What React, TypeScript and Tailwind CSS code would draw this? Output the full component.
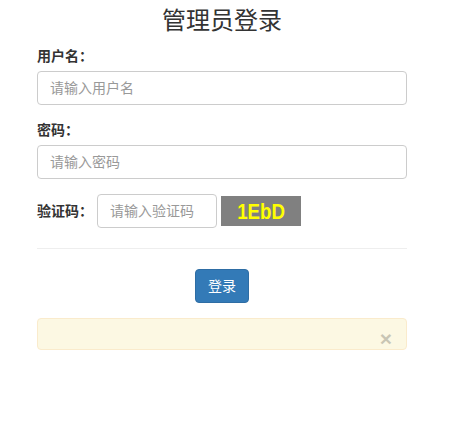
import React from "react";

export default function App() {
  const font = {
    fontFamily:
      '"Liberation Sans", "Noto Sans CJK SC", Arial, sans-serif',
  };
  return (
    <div className="min-h-[421px] w-[449px] bg-white text-[#333]" style={font}>
      <div className="ml-[37px] w-[370px]">
        <h1 className="pt-[7px] pb-[11px] text-center text-[24px] leading-[28px] font-normal text-[#333]">
          管理员登录
        </h1>
        <div className="mb-[15px]">
          <label className="mb-[5px] block text-[14px] leading-[20px] font-bold">
            用户名：
          </label>
          <input
            className="block h-[34px] w-full rounded-[4px] border border-[#ccc] px-[12px] text-[14px] outline-none placeholder:text-[#999]"
            placeholder="请输入用户名"
          />
        </div>
        <div className="mb-[15px]">
          <label className="mb-[5px] block text-[14px] leading-[20px] font-bold">
            密码：
          </label>
          <input
            type="text"
            className="block h-[34px] w-full rounded-[4px] border border-[#ccc] px-[12px] text-[14px] outline-none placeholder:text-[#999]"
            placeholder="请输入密码"
          />
        </div>
        <div className="flex items-center">
          <label className="w-[60px] text-[14px] leading-[20px] font-bold">
            验证码：
          </label>
          <input
            className="block h-[34px] w-[120px] rounded-[4px] border border-[#ccc] px-[12px] text-[14px] outline-none placeholder:text-[#999]"
            placeholder="请输入验证码"
          />
          <div
            className="ml-[4px] flex h-[30px] w-[80px] items-center justify-center bg-[#808080] text-[22px] font-bold text-[#ffff00]"
            style={{ fontFamily: '"Liberation Sans", Arial, sans-serif' }}
          >
            <span className="inline-block scale-x-[0.85]">1EbD</span>
          </div>
        </div>
        <hr className="my-[20px] border-t border-[#eee]" />
        <div className="flex justify-center">
          <button className="h-[34px] w-[54px] rounded-[4px] border border-[#2e6da4] bg-[#337ab7] text-[14px] text-white">
            登录
          </button>
        </div>
        <div className="relative mt-[15px] h-[32px] rounded-[4px] border border-[#faebcc] bg-[#fcf8e3]">
          <span
            className="absolute right-[14px] top-[9px] text-[21px] leading-[21px] font-bold text-black opacity-20"
            style={{ fontFamily: '"Liberation Sans", Arial, sans-serif' }}
          >
            ×
          </span>
        </div>
      </div>
    </div>
  );
}
